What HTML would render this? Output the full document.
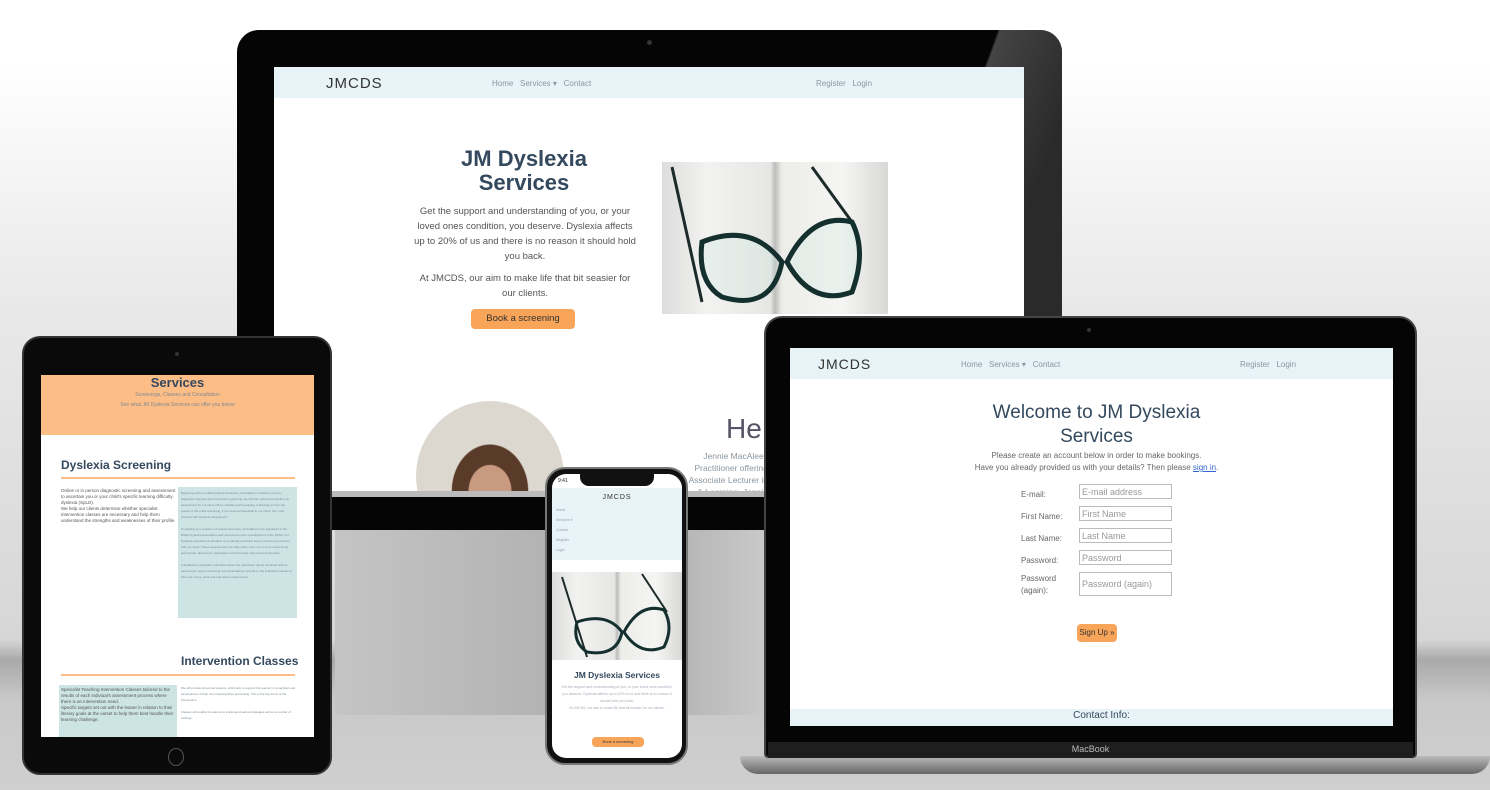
<!DOCTYPE html>
<html><head><meta charset="utf-8">
<style>
*{margin:0;padding:0;box-sizing:border-box}
body{width:1490px;height:790px;overflow:hidden;position:relative;font-family:"Liberation Sans",sans-serif;color:#34495e;
background:linear-gradient(#fff 0px,#fff 60px,#e9e9e9 300px,#d6d6d6 640px,#a9a9a9 660px,#c9c9c9 700px,#cfcfcf 790px)}
.a{position:absolute}
.nav{background:#e8f3f8}
.g{color:#8a96a0}
.book{background:linear-gradient(90deg,#ddd 0%,#f2f2f0 20%,#e6e6e4 48%,#bcbcbc 50%,#ecece9 53%,#f5f5f3 80%,#d8d8d6 100%)}
.btn{background:#f8a55a;border-radius:4px;color:#333;text-align:center}
.tl{font-size:3px;line-height:6px;color:#7d8a92}
input{border:1px solid #bbb;font-size:9px;padding:2px;color:#999;font-family:"Liberation Sans",sans-serif;width:93px;height:15px}
</style></head><body>

<!-- iMac -->
<div class="a" style="left:237px;top:30px;width:825px;height:468px;background:#050505;border-radius:22px 22px 0 0"></div>
<div class="a" style="left:925px;top:30px;width:137px;height:290px;background:linear-gradient(110deg,transparent 30%,#444 31%,#2a2a2a 70%);border-radius:0 22px 0 0"></div>
<div class="a" style="left:647px;top:40px;width:5px;height:5px;border-radius:50%;background:#333"></div>
<div class="a" style="left:335px;top:530px;width:430px;height:185px;background:linear-gradient(90deg,#c4c4c4,#ababab 70%,#c9c9c9)"></div>
<div class="a" style="left:237px;top:496px;width:825px;height:34px;background:#050505"></div>
<div class="a" style="left:274px;top:67px;width:750px;height:424px;background:#fff;overflow:hidden">
 <div class="a nav" style="left:0;top:0;width:750px;height:31px"></div>
 <div class="a" style="left:52px;top:8px;font-size:15px;color:#333;letter-spacing:1px">JMCDS</div>
 <div class="a g" style="left:218px;top:12px;font-size:8px">Home &nbsp; Services ▾ &nbsp; Contact</div>
 <div class="a g" style="left:542px;top:12px;font-size:8px">Register &nbsp; Login</div>
 <div class="a" style="left:140px;top:80px;width:220px;text-align:center;font-size:22px;font-weight:bold;line-height:24px">JM Dyslexia<br>Services</div>
 <div class="a" style="left:138px;top:137px;width:226px;text-align:center;font-size:9.5px;line-height:15px;color:#555">Get the support and understanding of you, or your loved ones condition, you deserve. Dyslexia affects up to 20% of us and there is no reason it should hold you back.<br><span style="display:block;margin-top:7px">At JMCDS, our aim to make life that bit seasier for our clients.</span></div>
 <div class="a btn" style="left:197px;top:242px;width:104px;height:20px;font-size:9.5px;line-height:20px">Book a screening</div>
 <div class="a book" style="left:388px;top:95px;width:226px;height:152px">
  <svg width="226" height="152" class="a" style="left:0;top:0"><path d="M10 5 L40 140 M150 5 L190 60" stroke="#1c2a2a" stroke-width="3" fill="none"/><path d="M40 80 Q90 60 120 100 Q110 150 60 135 Q35 120 40 80Z M125 100 Q150 50 190 60 Q205 90 190 130 Q150 145 125 100Z" stroke="#13302e" stroke-width="5" fill="rgba(200,230,225,.25)"/></svg>
 </div>
 <div class="a" style="left:142px;top:334px;width:148px;height:150px;border-radius:50%;background:radial-gradient(ellipse at 50% 60%,#c89a80 0 20%,#5a3a28 21% 36%,#ddd8cf 37%)"></div>
 <div class="a" style="left:452px;top:346px;font-size:28px;color:#556">He</div>
 <div class="a g" style="left:414px;top:383px;font-size:8.5px;line-height:12px;text-align:right;width:80px;white-space:nowrap">Jennie MacAlees<br>Practitioner offering<br>Associate Lecturer in<br>&amp; Learning. Jennie</div>
</div>
<div class="a" style="left:274px;top:491px;width:750px;height:6px;background:#bbb"></div>

<!-- iPad -->
<div class="a" style="left:22px;top:336px;width:310px;height:439px;background:#0a0a0a;border-radius:18px;border:2px solid #333"></div>
<div class="a" style="left:175px;top:352px;width:4px;height:4px;border-radius:50%;background:#333"></div>
<div class="a" style="left:168px;top:748px;width:16px;height:18px;border-radius:50%;border:1px solid #555"></div>
<div class="a" style="left:41px;top:375px;width:273px;height:362px;background:#fff;overflow:hidden">
 <div class="a" style="left:0;top:0;width:273px;height:60px;background:#fdbd86"></div>
 <div class="a" style="left:0;top:0;width:273px;text-align:center;font-size:13px;font-weight:bold">Services</div>
 <div class="a tl" style="left:0;top:17px;width:273px;text-align:center;font-size:5px">Screenings, Classes and Consultation</div>
 <div class="a tl" style="left:0;top:27px;width:273px;text-align:center;font-size:5px">See what JM Dyslexia Services can offer you below</div>
 <div class="a" style="left:20px;top:83px;font-size:12px;font-weight:bold">Dyslexia Screening</div>
 <div class="a" style="left:20px;top:102px;width:234px;height:2px;background:#fdbd86"></div>
 <div class="a tl" style="left:20px;top:113px;width:117px;font-size:4.5px;line-height:6px;color:#555">Online or in person diagnostic screening and assessment to ascertain you or your child's specific learning difficulty dyslexia (SpLD).<br>We help our clients determine whether specialist intervention classes are necessary and help them understand the strengths and weaknesses of their profile.</div>
 <div class="a tl" style="left:137px;top:112px;width:119px;height:131px;background:#cde4e5;padding:3px">Beginning with an initial Dyslexia Screening consultation consisting of a pre-diagnostic interview and information gathering, we will then determine whether an assessment for our client will be suitable and necessary. Following on from the results of this initial screening, if it is deemed beneficial to our client, they may proceed with Dyslexia Assessment.<br><br>Consisting of a selection of assessment tests, accredited to the standards of the British Dyslexia Association and carried out to the specifications of the SASC, our Dyslexia Assessment will allow us to identify particular areas of focus and concern with our client. These assessments can take place over one or more sessions as appropriate, allowing for participant comfort breaks and personal schedule.<br><br>A feedback consultation will follow where the participant will be furnished with an assessment report containing recommendations specific to the individual relevant to their own home, work and education environments.</div>
 <div class="a" style="left:140px;top:279px;font-size:12px;font-weight:bold">Intervention Classes</div>
 <div class="a" style="left:20px;top:299px;width:234px;height:2px;background:#fdbd86"></div>
 <div class="a tl" style="left:18px;top:310px;width:118px;height:52px;background:#cde4e5;padding:2px;font-size:4.5px;color:#555">Specialist Teaching Intervention Classes tailored to the results of each indiviual's assessment process where there is an intervention need.<br>Specific targets set out with the leaner in relation to their literary goals at the outset to help them best handle their learning challenge.</div>
 <div class="a tl" style="left:140px;top:310px;width:118px">We will provide structured lessons, which aim to support the learner in recognition and development of their own metacognitive processing. This is the key focus of the intervention.<br><br>Classes will enable the learner to implement learned strategies across a number of settings.</div>
</div>

<!-- MacBook -->
<div class="a" style="left:740px;top:756px;width:750px;height:18px;background:linear-gradient(#bbb,#888 60%,#666);border-radius:0 0 40px 40px"></div>
<div class="a" style="left:764px;top:316px;width:653px;height:442px;background:#050505;border-radius:18px 18px 4px 4px;border:2px solid #444"></div>
<div class="a" style="left:768px;top:742px;width:645px;height:16px;background:#1e1e1e"></div>
<div class="a" style="left:768px;top:744px;width:645px;text-align:center;font-size:9px;color:#bbb">MacBook</div>
<div class="a" style="left:1087px;top:328px;width:4px;height:4px;border-radius:50%;background:#333"></div>
<div class="a" style="left:790px;top:348px;width:603px;height:378px;background:#fff;overflow:hidden">
 <div class="a nav" style="left:0;top:0;width:603px;height:31px"></div>
 <div class="a" style="left:28px;top:8px;font-size:14px;color:#333;letter-spacing:1px">JMCDS</div>
 <div class="a g" style="left:171px;top:12px;font-size:8px">Home &nbsp; Services ▾ &nbsp; Contact</div>
 <div class="a g" style="left:450px;top:12px;font-size:8px">Register &nbsp; Login</div>
 <div class="a" style="left:150px;top:53px;width:313px;text-align:center;font-size:19px;line-height:24px">Welcome to JM Dyslexia<br>Services</div>
 <div class="a" style="left:100px;top:102px;width:413px;text-align:center;font-size:8px;line-height:12px;color:#666">Please create an account below in order to make bookings.<br>Have you already provided us with your details? Then please <u style="color:#36c">sign in</u>.</div>
 <div class="a" style="left:231px;top:136px;font-size:8px;color:#666;line-height:22px">E-mail:<br>First Name:<br>Last Name:<br>Password:</div>
 <div class="a" style="left:231px;top:225px;font-size:8px;color:#666;line-height:12px">Password<br>(again):</div>
 <input class="a" style="left:289px;top:136px" value="E-mail address">
 <input class="a" style="left:289px;top:158px" value="First Name">
 <input class="a" style="left:289px;top:180px" value="Last Name">
 <input class="a" style="left:289px;top:202px" value="Password">
 <input class="a" style="left:289px;top:224px;height:24px" value="Password (again)">
 <div class="a btn" style="left:287px;top:276px;width:40px;height:18px;font-size:8px;line-height:18px">Sign Up »</div>
 <div class="a nav" style="left:0;top:361px;width:603px;height:17px"></div>
 <div class="a" style="left:0;top:362px;width:623px;text-align:center;font-size:10px">Contact Info:</div>
</div>

<!-- iPhone -->
<div class="a" style="left:545px;top:467px;width:143px;height:298px;background:#111;border-radius:20px;border:2px solid #777"></div>
<div class="a" style="left:552px;top:474px;width:130px;height:284px;background:#fff;border-radius:14px;overflow:hidden">
 <div class="a nav" style="left:0;top:14px;width:130px;height:72px"></div>
 <div class="a" style="left:28px;top:0;width:74px;height:12px;background:#111;border-radius:0 0 9px 9px"></div>
 <div class="a" style="left:6px;top:4px;font-size:5px;color:#222">9:41</div>
 <div class="a" style="left:0;top:20px;width:130px;text-align:center;font-size:7px;color:#333;letter-spacing:1px">JMCDS</div>
 <div class="a" style="left:4px;top:31px;font-size:3.5px;line-height:10px;color:#99a">Home<br>Services ▾<br>Contact<br>Register<br>Login</div>
 <div class="a book" style="left:0;top:98px;width:130px;height:88px">
  <svg width="130" height="88" class="a"><path d="M10 5 L35 85 M90 2 L115 40" stroke="#1c2a2a" stroke-width="2" fill="none"/><path d="M25 50 Q55 40 70 60 Q65 85 35 80 Q20 70 25 50Z M72 60 Q88 30 112 38 Q122 55 112 75 Q88 85 72 60Z" stroke="#13302e" stroke-width="3" fill="none"/></svg>
 </div>
 <div class="a" style="left:0;top:196px;width:130px;text-align:center;font-size:8.5px;font-weight:bold">JM Dyslexia Services</div>
 <div class="a" style="left:8px;top:210px;width:114px;text-align:center;font-size:3.5px;line-height:7px;color:#aab">Get the support and understanding of you, or your loved ones condition, you deserve. Dyslexia affects up to 20% of us and there is no reason it should hold you back.<br>At JMCDS, our aim to make life that bit seasier for our clients.</div>
 <div class="a btn" style="left:40px;top:263px;width:52px;height:10px;font-size:4px;line-height:10px">Book a screening</div>
</div>
</body></html>
